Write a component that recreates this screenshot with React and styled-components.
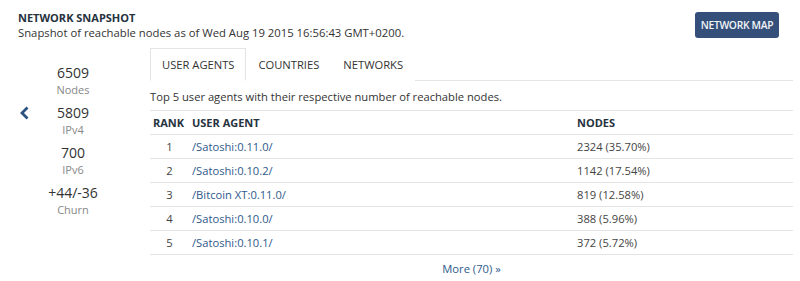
import React from "react";
import styled, { createGlobalStyle } from "styled-components";

const GlobalStyle = createGlobalStyle`
	body {
		margin: 0;
		background: #fff;
		font-family: "Open Sans", "Noto Sans", sans-serif;
		color: #333;
	}
`;

const stats = [
	{ value: "6509", label: "Nodes" },
	{ value: "5809", label: "IPv4" },
	{ value: "700", label: "IPv6" },
	{ value: "+44/-36", label: "Churn" },
];

const agents = [
	{ rank: 1, name: "/Satoshi:0.11.0/", nodes: "2324 (35.70%)" },
	{ rank: 2, name: "/Satoshi:0.10.2/", nodes: "1142 (17.54%)" },
	{ rank: 3, name: "/Bitcoin XT:0.11.0/", nodes: "819 (12.58%)" },
	{ rank: 4, name: "/Satoshi:0.10.0/", nodes: "388 (5.96%)" },
	{ rank: 5, name: "/Satoshi:0.10.1/", nodes: "372 (5.72%)" },
];

function App() {
	return (
		<>
			<GlobalStyle />
			<Page>
				<HeaderStyles>
					<div>
						<Title>NETWORK SNAPSHOT</Title>
						<Subtitle>
							Snapshot of reachable nodes as of Wed Aug 19 2015 16:56:43 GMT+0200.
						</Subtitle>
					</div>
					<MapButton>NETWORK MAP</MapButton>
				</HeaderStyles>
				<Body>
					<Side>
						<Chevron viewBox="0 0 10 14">
							<path d="M8 1.5 L2.5 7 L8 12.5" fill="none" stroke="#2c5282" strokeWidth="2.8" strokeLinejoin="miter" />
						</Chevron>
						<Stats>
							{stats.map((s) => (
								<Stat key={s.label}>
									<StatValue>{s.value}</StatValue>
									<StatLabel>{s.label}</StatLabel>
								</Stat>
							))}
						</Stats>
					</Side>
					<Panel>
						<Tabs>
							<Tab active>USER AGENTS</Tab>
							<Tab>COUNTRIES</Tab>
							<Tab>NETWORKS</Tab>
						</Tabs>
						<Desc>Top 5 user agents with their respective number of reachable nodes.</Desc>
						<Table>
							<thead>
								<tr>
									<Th width="33px">RANK</Th>
									<Th>USER AGENT</Th>
									<Th width="213px">NODES</Th>
								</tr>
							</thead>
							<tbody>
								{agents.map((a) => (
									<tr key={a.rank}>
										<Td center>{a.rank}</Td>
										<Td>
											<AgentLink href="#">{a.name}</AgentLink>
										</Td>
										<Td>{a.nodes}</Td>
									</tr>
								))}
							</tbody>
						</Table>
						<More href="#">More (70) »</More>
					</Panel>
				</Body>
			</Page>
		</>
	);
}

export default App;

const Page = styled.div`
	width: 800px;
	height: 281px;
	box-sizing: border-box;
	padding: 11px 7px 0 18px;
	font-size: 11.2px;
`;

const HeaderStyles = styled.div`
	display: flex;
	justify-content: space-between;
	align-items: flex-start;
`;

const Title = styled.div`
	font-weight: 700;
	font-size: 11px;
	color: #26323e;
	line-height: 14px;
`;

const Subtitle = styled.div`
	font-size: 11.3px;
	line-height: 16px;
	color: #333;
`;

const MapButton = styled.button`
	margin-top: 1px;
	margin-right: 14px;
	height: 26px;
	width: 84px;
	padding: 0;
	border: 0;
	border-radius: 3px;
	background: #34507a;
	color: #f2f4f8;
	font-family: inherit;
	font-size: 10.3px;
	font-weight: 600;
	letter-spacing: -0.3px;
	white-space: nowrap;
`;

const Body = styled.div`
	display: flex;
	margin-top: 7px;
`;

const Side = styled.div`
	width: 132px;
	display: flex;
	align-items: flex-start;
	padding-top: 16px;
`;

const Chevron = styled.svg`
	width: 11px;
	height: 14px;
	margin-top: 42px;
	margin-left: 1px;
`;

const Stats = styled.div`
	width: 86px;
	display: flex;
	flex-direction: column;
	align-items: center;
	gap: 6px;
`;

const Stat = styled.div`
	display: flex;
	flex-direction: column;
	align-items: center;
`;

const StatValue = styled.div`
	font-size: 14px;
	line-height: 18px;
	color: #333;
`;

const StatLabel = styled.div`
	font-size: 11px;
	line-height: 16px;
	color: #888;
`;

const Panel = styled.div`
	flex: 1;
	display: flex;
	flex-direction: column;
`;

const Tabs = styled.div`
	display: flex;
	border-bottom: 1px solid #e4e4e4;
	height: 32px;
`;

const Tab = styled.div`
	padding: 0 11px;
	margin-bottom: -1px;
	display: flex;
	align-items: center;
	font-size: 11.2px;
	color: #333;
	border: 1px solid ${(p) => (p.active ? "#e4e4e4" : "transparent")};
	border-bottom-color: ${(p) => (p.active ? "#fff" : "transparent")};
	background: #fff;
`;

const Desc = styled.div`
	margin-top: 8px;
	line-height: 16px;
`;

const Table = styled.table`
	margin-top: 5px;
	width: 100%;
	border-collapse: collapse;
	border-top: 1px solid #e4e4e4;
`;

const Th = styled.th`
	width: ${(p) => p.width || "auto"};
	text-align: left;
	font-weight: 700;
	font-size: 11px;
	color: #26323e;
	height: 23px;
	padding: 0 3px;
	border-bottom: 1px solid #e4e4e4;
`;

const Td = styled.td`
	height: 23px;
	padding: 0 3px;
	text-align: ${(p) => (p.center ? "center" : "left")};
	border-bottom: 1px solid #e4e4e4;
	color: #444;
`;

const AgentLink = styled.a`
	color: #2e5a8a;
	text-decoration: none;
`;

const More = styled.a`
	align-self: center;
	margin-top: 6px;
	color: #2e5a8a;
	text-decoration: none;
`;
